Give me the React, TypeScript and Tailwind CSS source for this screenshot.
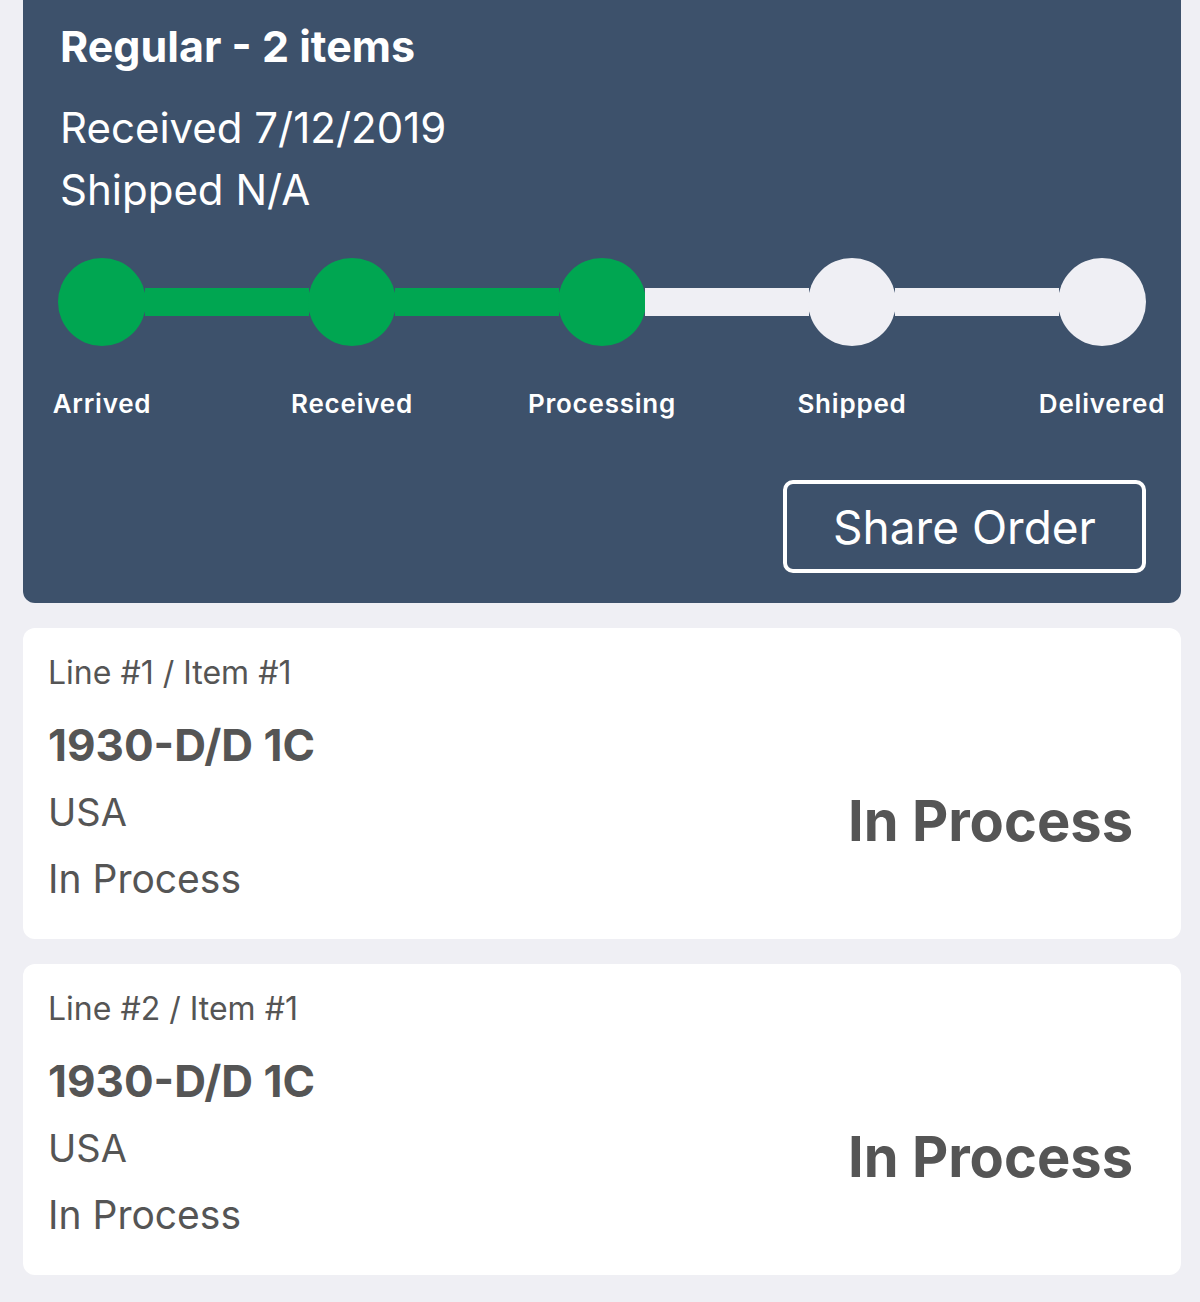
import React from 'react';

const steps = ['Arrived', 'Received', 'Processing', 'Shipped', 'Delivered'];
const doneCount = 3;

const lines = [
    { line: 1, item: 1, title: '1930-D/D 1C', country: 'USA', status: 'In Process' },
    { line: 2, item: 1, title: '1930-D/D 1C', country: 'USA', status: 'In Process' },
];

const ProgressTrack: React.FC = () => (
    <div className="flex items-center">
        {steps.map((s, i) => (
            <React.Fragment key={s}>
                {i > 0 && (
                    <div className={`h-[28px] flex-1 -mx-px ${i < doneCount ? 'bg-[#00a651]' : 'bg-[#efeff4]'}`} />
                )}
                <div className={`w-[88px] h-[88px] rounded-full shrink-0 ${i < doneCount ? 'bg-[#00a651]' : 'bg-[#efeff4]'}`} />
            </React.Fragment>
        ))}
    </div>
);

const StepLabels: React.FC = () => (
    <div className="flex items-center mt-[42px]">
        {steps.map((s, i) => (
            <React.Fragment key={s}>
                {i > 0 && <div className="flex-1" />}
                <div className="w-[88px] shrink-0 flex justify-center">
                    <span className="whitespace-nowrap text-[26px] leading-[32px] font-semibold tracking-[0.03em] text-white">{s}</span>
                </div>
            </React.Fragment>
        ))}
    </div>
);

export default function App() {
    return (
        <div className="min-h-[1302px] bg-[#efeff4] pl-[23px] pr-[19px] pb-[28px] font-['Inter',sans-serif]">
            <div className="bg-[#3d516b] rounded-b-[12px] pl-[35px] pr-[35px] pt-[20px] pb-[30px]">
                <div className="pl-[2px] text-white">
                    <div className="text-[43px] leading-[52px] font-bold">Regular - 2 items</div>
                    <div className="text-[42px] leading-[64px] mt-[24px]">Received 7/12/2019</div>
                    <div className="text-[42px] leading-[64px] -mt-[2px]">Shipped N/A</div>
                </div>
                <div className="mt-[36px]">
                    <ProgressTrack />
                    <StepLabels />
                </div>
                <div className="flex justify-end mt-[60px]">
                    <button className="w-[363px] h-[93px] border-[4px] border-white rounded-[10px] text-white text-[46px] leading-none font-normal">
                        Share Order
                    </button>
                </div>
            </div>

            {lines.map(l => (
                <div key={l.line} className="mt-[25px] bg-white rounded-[12px] h-[311px] pl-[25px] pr-[48px] flex items-start text-[#555555]">
                    <div className="flex-1 pt-[27px]">
                        <div className="text-[32px] leading-[36px]">Line #{l.line} / Item #{l.item}</div>
                        <div className="text-[44px] leading-[50px] font-bold mt-[29px]">{l.title}</div>
                        <div className="text-[38px] leading-[50px] mt-[17px]">{l.country}</div>
                        <div className="text-[39px] leading-[50px] mt-[17px]">{l.status}</div>
                    </div>
                    <div className="self-center mt-[74px] text-[56px] font-bold leading-[70px]">{l.status}</div>
                </div>
            ))}
        </div>
    );
}
